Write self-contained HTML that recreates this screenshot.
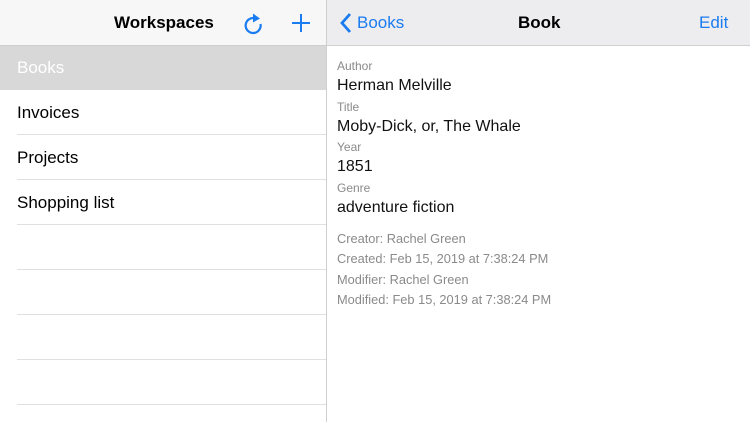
<!DOCTYPE html><html><head><style>
body{margin:0;width:750px;height:422px;overflow:hidden;font-family:"Liberation Sans",sans-serif;background:#fff;position:relative}
.a{position:absolute;white-space:nowrap}
.blue{color:#1a7cf0}
.sep{position:absolute;left:17px;width:309px;height:1px;background:#e0e0e0}
.lab{position:absolute;left:337px;font-size:12px;color:#8a8a8a}
.val{position:absolute;left:337px;font-size:16px;color:#111}
.meta{position:absolute;left:337px;font-size:12.8px;color:#8a8a8a}
</style></head><body>
<div class="a" style="left:0;top:0;width:326px;height:45px;background:#f7f7f7;border-bottom:1px solid #cfcfcf"></div>
<div class="a" style="left:327px;top:0;width:423px;height:45px;background:#ededef;border-bottom:1px solid #cfcfcf"></div>
<div class="a" style="left:326px;top:0;width:1px;height:422px;background:#cfcfcf"></div>
<div class="a" style="left:114px;top:13px;font-size:17px;font-weight:bold;color:#000">Workspaces</div>
<svg class="a" style="left:241px;top:10px" width="24" height="26" viewBox="0 0 24 26"><path d="M15.5 8.8 A7.5 7.5 0 1 0 19.5 14" fill="none" stroke="#1a7cf0" stroke-width="2.2"/><path d="M12 3.5 L19 8.5 L12 12.5 Z" fill="#1a7cf0"/></svg>
<svg class="a" style="left:290px;top:12px" width="22" height="22"><path d="M11 2V20M2 11H20" stroke="#1a7cf0" stroke-width="2"/></svg>
<svg class="a" style="left:339px;top:12px" width="14" height="22"><path d="M11 2L3 11L11 20" fill="none" stroke="#1a7cf0" stroke-width="2.8"/></svg>
<div class="a blue" style="left:357px;top:13px;font-size:17px">Books</div>
<div class="a" style="left:518px;top:13px;font-size:17px;font-weight:bold">Book</div>
<div class="a blue" style="left:699px;top:13px;font-size:17px">Edit</div>
<div class="a" style="left:0;top:46px;width:326px;height:44px;background:#d8d8d8"></div>
<div class="a" style="left:17px;top:58px;font-size:17px;color:#fff">Books</div>
<div class="a" style="left:17px;top:103px;font-size:17px">Invoices</div>
<div class="a" style="left:17px;top:148px;font-size:17px">Projects</div>
<div class="a" style="left:17px;top:193px;font-size:17px">Shopping list</div>
<div class="sep" style="top:134px"></div><div class="sep" style="top:179px"></div><div class="sep" style="top:224px"></div><div class="sep" style="top:269px"></div><div class="sep" style="top:314px"></div><div class="sep" style="top:359px"></div><div class="sep" style="top:404px"></div>
<div class="lab" style="top:59px">Author</div><div class="val" style="top:77px">Herman Melville</div>
<div class="lab" style="top:100px">Title</div><div class="val" style="top:118px">Moby-Dick, or, The Whale</div>
<div class="lab" style="top:140px">Year</div><div class="val" style="top:158px">1851</div>
<div class="lab" style="top:181px">Genre</div><div class="val" style="top:199px">adventure fiction</div>
<div class="meta" style="top:231px">Creator: Rachel Green</div>
<div class="meta" style="top:251px">Created: Feb 15, 2019 at 7:38:24 PM</div>
<div class="meta" style="top:272px">Modifier: Rachel Green</div>
<div class="meta" style="top:292px">Modified: Feb 15, 2019 at 7:38:24 PM</div>
</body></html>
